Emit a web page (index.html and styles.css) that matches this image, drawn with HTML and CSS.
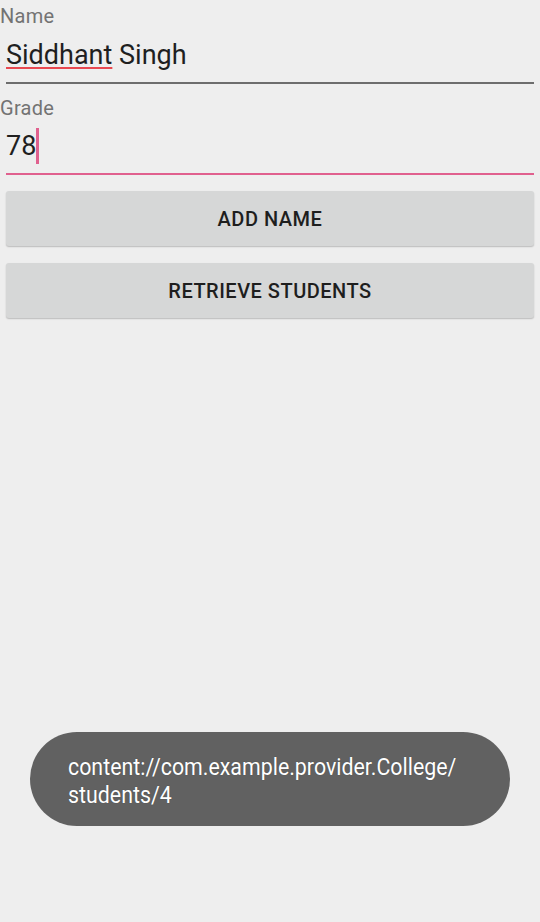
FILE: index.html
```html
<!DOCTYPE html>
<html>
<head>
<meta charset="utf-8">
<link rel="stylesheet" href="styles.css">
</head>
<body>
<div class="screen">
  <div class="form">
    <div class="label label-name">Name</div>
    <div class="input input-name"><span class="misspelled">Siddhant</span> Singh</div>
    <div class="label label-grade">Grade</div>
    <div class="input input-grade focused">78<span class="cursor"></span></div>
    <button class="btn btn-add">ADD NAME</button>
    <button class="btn btn-retrieve">RETRIEVE STUDENTS</button>
  </div>
  <div class="toast"><span class="toast-text">content://com.example.provider.College/<br>students/4</span></div>
</div>
</body>
</html>
```
FILE: styles.css
```css
html, body {
  margin: 0;
  padding: 0;
  background: #eeeeee;
}
.screen {
  position: relative;
  width: 540px;
  height: 922px;
  overflow: hidden;
  font-family: Roboto, "Noto Sans", sans-serif;
}
.form {
  display: flex;
  flex-direction: column;
}
.label {
  font-size: 20px;
  color: #737373;
  line-height: 20px;
  letter-spacing: 0.3px;
}
.label-name {
  margin-top: 6px;
}
.label-grade {
  margin-top: 14px;
}
.input {
  margin: 0 6px;
  font-size: 27px;
  color: #1f1f1f;
  line-height: 32px;
  padding-top: 13px;
  padding-bottom: 11px;
  border-bottom: 2px solid #6d6d6d;
  display: flex;
  align-items: center;
  white-space: pre;
}
.input-grade {
  padding-top: 10px;
  padding-bottom: 9px;
}
.input.focused {
  border-bottom-color: #e0608e;
}
.misspelled {
  text-decoration: underline;
  text-decoration-color: #e84850;
  text-decoration-thickness: 2px;
  text-underline-offset: 3px;
}
.cursor {
  display: inline-block;
  width: 2.5px;
  height: 36px;
  background: #e0608e;
  margin-left: 0;
}
.btn {
  margin: 16px 6px 0;
  height: 55px;
  border: none;
  border-radius: 3px;
  background: #d6d7d7;
  box-shadow: 0 1px 1.5px rgba(0, 0, 0, 0.22);
  font-family: Roboto, "Noto Sans", sans-serif;
  font-weight: 500;
  font-size: 20px;
  color: #1e1e1e;
  letter-spacing: 0.5px;
  padding: 0;
}
.btn-add {
  margin-top: 16px;
}
.btn-retrieve {
  margin-top: 17px;
}
.toast {
  position: absolute;
  left: 30px;
  top: 732px;
  width: 480px;
  height: 94px;
  box-sizing: border-box;
  padding: 21px 38px 0;
  border-radius: 47px;
  background: #616161;
  color: #ffffff;
}
.toast-text {
  display: inline-block;
  font-size: 24px;
  line-height: 28px;
  white-space: nowrap;
  transform: scaleX(0.89);
  transform-origin: left top;
  text-shadow: 0 0 1px rgba(0, 0, 0, 0.3);
}
```
